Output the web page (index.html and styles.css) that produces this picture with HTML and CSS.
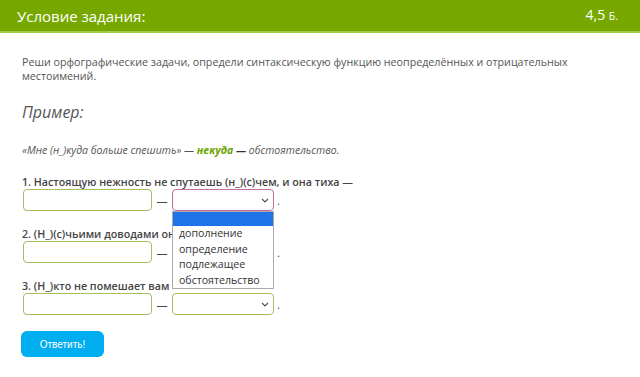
FILE: index.html
```html
<!DOCTYPE html>
<html lang="ru">
<head>
<meta charset="utf-8">
<link rel="stylesheet" href="styles.css">
</head>
<body>
<header class="bar">
  <div class="bar-title">Условие задания:</div>
  <div class="bar-score"><span class="score-num">4,5</span> <span class="score-unit">Б.</span></div>
</header>
<main class="content">
  <p class="task">Реши орфографические задачи, определи синтаксическую функцию неопределённых и отрицательных местоимений.</p>
  <h2 class="example-title">Пример:</h2>
  <p class="example">«Мне (н_)куда больше спешить» — <b class="green">некуда</b> <b class="dash">—</b> обстоятельство.</p>

  <div class="item">
    <div class="label">1. Настоящую нежность не спутаешь (н_)(с)чем, и она тиха —</div>
    <div class="row">
      <div class="field"></div>
      <span class="sep">—</span>
      <div class="select focused">
        <svg class="chev" width="8" height="5" viewBox="0 0 8 5"><path d="M1 1 L4 4 L7 1" fill="none" stroke="#555" stroke-width="1.2"/></svg>
        <ul class="menu">
          <li class="opt blank"></li>
          <li class="opt">дополнение</li>
          <li class="opt">определение</li>
          <li class="opt">подлежащее</li>
          <li class="opt">обстоятельство</li>
        </ul>
      </div>
      <span class="dot">.</span>
    </div>
  </div>

  <div class="item">
    <div class="label">2. (Н_)(с)чьими доводами он не согласится —</div>
    <div class="row">
      <div class="field"></div>
      <span class="sep">—</span>
      <div class="select">
        <svg class="chev" width="8" height="5" viewBox="0 0 8 5"><path d="M1 1 L4 4 L7 1" fill="none" stroke="#555" stroke-width="1.2"/></svg>
      </div>
      <span class="dot">.</span>
    </div>
  </div>

  <div class="item">
    <div class="label">3. (Н_)кто не помешает вам —</div>
    <div class="row">
      <div class="field"></div>
      <span class="sep">—</span>
      <div class="select">
        <svg class="chev" width="8" height="5" viewBox="0 0 8 5"><path d="M1 1 L4 4 L7 1" fill="none" stroke="#555" stroke-width="1.2"/></svg>
      </div>
      <span class="dot">.</span>
    </div>
  </div>

  <button class="submit">Ответить!</button>
</main>
</body>
</html>
```
FILE: styles.css
```css
html, body {
  margin: 0;
  padding: 0;
  background: #fff;
}
body {
  font-family: "Open Sans", "Noto Sans", sans-serif;
  color: #555;
}
.bar {
  height: 31px;
  background: #76a800;
  border-bottom: 2px solid #a3c94c;
  display: flex;
  align-items: center;
  justify-content: space-between;
  padding: 0 22px 0 17px;
  color: #fff;
}
.bar-title {
  font-size: 15px;
  line-height: 20px;
}
.bar-score {
  font-size: 14px;
  line-height: 20px;
}
.score-unit {
  font-size: 10.5px;
}
.content {
  padding: 0 22px;
}
.task {
  margin: 22px 0 0;
  font-size: 10.7px;
  line-height: 14px;
  color: #555;
}
.example-title {
  margin: 17px 0 0;
  font-size: 16px;
  line-height: 24px;
  font-weight: 400;
  font-style: italic;
  color: #555;
}
.example {
  margin: 19px 0 0;
  font-size: 10.5px;
  line-height: 14px;
  font-style: italic;
  color: #555;
}
.green {
  color: #6aa300;
  font-weight: 700;
}
.dash {
  color: #333;
}
.item {
  margin-top: 18px;
}
.item + .item {
  margin-top: 16px;
}
.label {
  font-size: 10.7px;
  line-height: 14px;
  font-weight: 600;
  color: #444;
}
.row {
  display: flex;
  align-items: center;
  height: 22px;
  padding-left: 1px;
}
.field {
  width: 127px;
  height: 20px;
  border: 1px solid #a2c05e;
  border-radius: 4px;
  background: #fff;
}
.sep {
  width: 20px;
  text-align: center;
  font-size: 11px;
  color: #444;
}
.select {
  position: relative;
  width: 100px;
  height: 20px;
  border: 1px solid #a2c05e;
  border-radius: 4px;
  background: #fff;
}
.select.focused {
  border-color: #c46a9e;
}
.chev {
  position: absolute;
  right: 4px;
  top: 8px;
}
.dot {
  margin-left: 3px;
  font-size: 11px;
  color: #444;
}
.menu {
  position: absolute;
  left: -1px;
  top: 21px;
  width: 100px;
  margin: 0;
  padding: 0;
  list-style: none;
  background: #fff;
  border: 1px solid #aaa;
  z-index: 5;
}
.opt {
  height: 15.5px;
  line-height: 15.5px;
  padding-left: 6px;
  font-size: 10.6px;
  color: #333;
}
.opt.blank {
  height: 14px;
  background: #1e73e8;
}
.submit {
  display: block;
  margin: 16px 0 0 -1px;
  width: 83px;
  height: 26px;
  border: none;
  border-radius: 6px;
  background: #00adef;
  color: #fff;
  font-family: "Liberation Sans", Arial, sans-serif;
  font-size: 10px;
  padding: 0;
}
```
